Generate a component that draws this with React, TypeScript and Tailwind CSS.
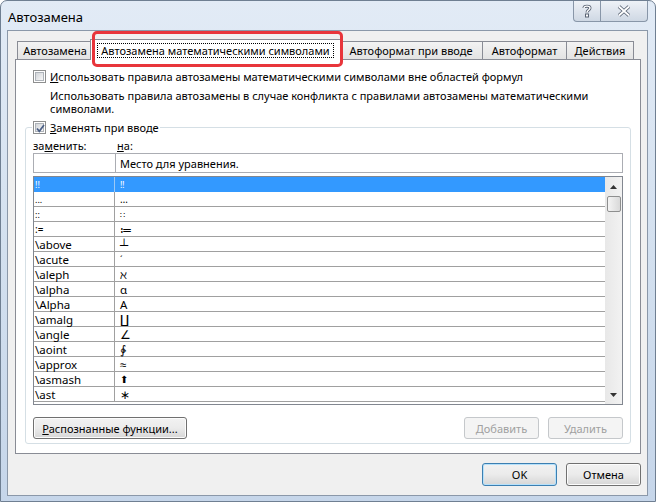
import React from 'react'

type Row = { key: string; value: string; valueCls?: string; keyCls?: string }

const rows: Row[] = [
  { key: '!!', value: '‼', keyCls: 'text-[9px]', valueCls: 'text-[9px]' },
  { key: '...', value: '…', keyCls: 'text-[9px]', valueCls: 'text-[10px]' },
  { key: '::', value: '∷', keyCls: 'text-[9px]', valueCls: 'text-[8px]' },
  { key: ':=', value: '≔', keyCls: 'text-[10px]' },
  { key: '\\above', value: '┴' },
  { key: '\\acute', value: 'ˊ', valueCls: 'text-[9px]' },
  { key: '\\aleph', value: 'ℵ' },
  { key: '\\alpha', value: 'α' },
  { key: '\\Alpha', value: 'Α' },
  { key: '\\amalg', value: '∐' },
  { key: '\\angle', value: '∠' },
  { key: '\\aoint', value: '∳' },
  { key: '\\approx', value: '≈' },
  { key: '\\asmash', value: '⬆\uFE0E', valueCls: "font-['DejaVu_Sans',sans-serif] text-[10px]" },
  { key: '\\ast', value: '∗' },
]

function Checkbox({ checked }: { checked?: boolean }) {
  return (
    <span className="relative flex size-[13px] shrink-0 items-center justify-center border border-[#8e8f8f] bg-white">
      <span className="size-[9px] border border-[#aeb3b9] bg-gradient-to-br from-[#d2d5d9] to-[#f7f7f7]" />
      {checked && (
        <svg className="absolute left-[1px] top-[1px]" width="11" height="11" viewBox="0 0 11 11">
          <path d="M2 5.5 L4.3 8.3 L9 2" fill="none" stroke="#4b5f86" strokeWidth="1.7" />
        </svg>
      )}
    </span>
  )
}

function Button({
  children,
  className = '',
  disabled,
  primary,
}: {
  children: React.ReactNode
  className?: string
  disabled?: boolean
  primary?: boolean
}) {
  if (disabled) {
    return (
      <div
        className={`flex items-center justify-center rounded-[3px] border border-[#c5c8cb] bg-[#f4f4f4] text-[#a0a0a0] ${className}`}
      >
        {children}
      </div>
    )
  }
  return (
    <div
      className={`flex items-center justify-center rounded-[3px] border ${
        primary ? 'border-[#3c7fb1] shadow-[inset_0_0_0_1px_#b6e1fb]' : 'border-[#707070] shadow-[inset_0_0_0_1px_#fcfcfc]'
      } bg-gradient-to-b from-[#f2f2f2] via-[#ebebeb] to-[#d6d6d6] ${className}`}
    >
      {children}
    </div>
  )
}

export default function App() {
  return (
    <div className="relative h-[502px] w-[656px] overflow-hidden rounded-t-[7px] border border-[#6f7f92] bg-gradient-to-b from-[#e2ebf6] via-[#d3e0ef] to-[#c6d6ea] font-['Noto_Sans',sans-serif] text-[11px] leading-[13px] text-black">
      {/* title bar */}
      <div className="flex h-[29px] items-start">
        <div className="pl-[7px] pt-[8px] text-[13px] leading-[16px]">Автозамена</div>
        <div className="ml-auto mr-[7px] flex h-[21px]">
          <div className="flex w-[28px] items-center justify-center rounded-bl-[4px] border border-t-0 border-[#8896a8] bg-gradient-to-b from-[#eef2f7] to-[#cfd8e4]">
            <svg width="10" height="14" viewBox="0 0 10 14">
              <path d="M2 4 C2 1.5 8 1.5 8 4 C8 6 5 6 5 8.5" fill="none" stroke="#5a6474" strokeWidth="3" />
              <path d="M2 4 C2 1.5 8 1.5 8 4 C8 6 5 6 5 8.5" fill="none" stroke="#ffffff" strokeWidth="1.4" />
              <rect x="3.5" y="10" width="3" height="3" fill="#ffffff" stroke="#5a6474" strokeWidth="1" />
            </svg>
          </div>
          <div className="-ml-px flex w-[48px] items-center justify-center rounded-br-[4px] border border-t-0 border-[#8896a8] bg-gradient-to-b from-[#eef2f7] to-[#cfd8e4]">
            <svg width="14" height="12" viewBox="0 0 14 12">
              <path d="M2 1.5 L12 10.5 M12 1.5 L2 10.5" stroke="#5a6474" strokeWidth="3.6" />
              <path d="M2 1.5 L12 10.5 M12 1.5 L2 10.5" stroke="#ffffff" strokeWidth="1.8" />
            </svg>
          </div>
        </div>
      </div>

      {/* client area */}
      <div className="ml-[6px] flex h-[466px] w-[641px] flex-col border border-[#8b98a9] bg-[#f0f0f0]">
        {/* tabs */}
        <div className="relative z-10 ml-[7px] mt-[8px] flex h-[20px] items-end pl-[2px]">
          <div className="flex h-[18px] w-[76px] items-center justify-center border border-b-0 border-[#898c95] bg-gradient-to-b from-[#f3f3f3] to-[#e3e3e3]">
            Автозамена
          </div>
          <div className="relative z-10 -mb-px -ml-[3px] -mr-[2px] flex h-[21px] w-[251px] items-center justify-center border border-b-0 border-[#898c95] bg-white">
            <span className="border border-dotted border-black px-[3px] leading-[13px]">Автозамена математическими символами</span>
          </div>
          <div className="flex h-[18px] w-[144px] items-center justify-center border border-b-0 border-[#898c95] bg-gradient-to-b from-[#f3f3f3] to-[#e3e3e3]">
            Автоформат при вводе
          </div>
          <div className="-ml-px flex h-[18px] w-[85px] items-center justify-center border border-b-0 border-[#898c95] bg-gradient-to-b from-[#f3f3f3] to-[#e3e3e3]">
            Автоформат
          </div>
          <div className="-ml-px flex h-[18px] w-[68px] items-center justify-center border border-b-0 border-[#898c95] bg-gradient-to-b from-[#f3f3f3] to-[#e3e3e3]">
            Действия
          </div>
        </div>

        {/* tab panel */}
        <div className="ml-[7px] h-[395px] w-[626px] border border-[#898c95] bg-white">
          <div className="ml-[17px] mt-[10px] flex h-[13px] items-center gap-[4px]">
            <Checkbox />
            <span>
              <span className="underline">И</span>спользовать правила автозамены математическими символами вне областей формул
            </span>
          </div>
          <div className="ml-[34px] mt-[6px] leading-[13px]">
            Использовать правила автозамены в случае конфликта с правилами автозамены математическими
            <br />
            символами.
          </div>

          <fieldset className="ml-[9px] mt-[6px] w-[606px] rounded-[3px] border border-[#d5dfe5] pb-[4px] pl-[7px] pr-[7px]">
            <legend className="-ml-[1px] px-[1px]">
              <span className="flex h-[13px] items-center gap-[4px]">
                <Checkbox checked />
                <span>
                  <span className="underline">З</span>аменять при вводе
                </span>
              </span>
            </legend>

            <div className="mt-[4px] flex h-[15px] items-center">
              <span className="w-[84px]">
                за<span className="underline">м</span>енить:
              </span>
              <span>
                <span className="underline">н</span>а:
              </span>
            </div>

            <div className="flex h-[20px]">
              <div className="w-[83px] border border-[#abadb3]" />
              <div className="-ml-px flex flex-1 items-center border border-[#abadb3] pl-[4px]">Место для уравнения.</div>
            </div>

            <div className="mt-[3px] flex h-[229px] w-[590px] border border-[#828790] text-[11.5px]">
              <div className="flex-1 overflow-hidden">
                {rows.map((r, i) => (
                  <div
                    key={r.key}
                    className={`flex h-[15px] ${i === 0 ? 'bg-[#3399ff] text-white' : 'border-b border-[#a0a0a0]'}`}
                  >
                    <div
                      className={`flex w-[81px] items-center border-r pl-[1px] ${
                        i === 0 ? 'border-[#9cc8f5]' : 'border-[#a0a0a0]'
                      } ${r.keyCls ?? ''}`}
                    >
                      {r.key}
                    </div>
                    <div className={`flex items-center pl-[5px] ${r.valueCls ?? ''}`}>{r.value}</div>
                  </div>
                ))}
              </div>
              <div className="flex w-[17px] flex-col items-center bg-gradient-to-r from-[#e8e8e8] to-[#f2f2f2]">
                <svg className="mt-[8px]" width="7" height="4" viewBox="0 0 7 4">
                  <path d="M0 4 L3.5 0 L7 4 Z" fill="#333" />
                </svg>
                <div className="mt-[7px] h-[16px] w-[14px] rounded-[2px] border border-[#8e8f8f] bg-gradient-to-r from-[#f4f4f4] to-[#d9d9d9]" />
                <svg className="mb-[7px] mt-auto" width="7" height="4" viewBox="0 0 7 4">
                  <path d="M0 0 L7 0 L3.5 4 Z" fill="#333" />
                </svg>
              </div>
            </div>

            <div className="mt-[12px] flex h-[22px]">
              <Button className="w-[154px]">
                <span>
                  <span className="underline">Р</span>аспознанные функции...
                </span>
              </Button>
              <Button disabled className="ml-auto w-[75px]">
                Добавить
              </Button>
              <Button disabled className="ml-[9px] w-[75px]">
                Удалить
              </Button>
            </div>
          </fieldset>
        </div>

        {/* dialog buttons */}
        <div className="mr-[6px] mt-[9px] flex h-[23px] justify-end gap-[9px]">
          <Button primary className="w-[75px]">
            OK
          </Button>
          <Button className="w-[75px]">Отмена</Button>
        </div>
      </div>

      {/* highlight around the selected tab */}
      <div className="pointer-events-none absolute left-[91px] top-[30px] z-20 h-[36px] w-[251px] rounded-[5px] border-[3px] border-[#e8353b]" />
    </div>
  )
}
